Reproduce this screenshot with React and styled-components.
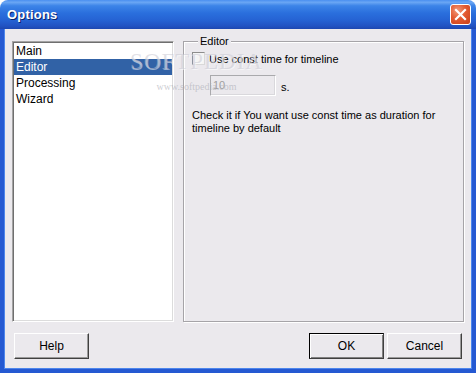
import styled, { createGlobalStyle } from "styled-components";

const GlobalStyle = createGlobalStyle`
    body {
        margin: 0;
        background: #ffffff;
        overflow: hidden;
        font-family: "Liberation Sans", Arial, sans-serif;
    }
`

const pages = ["Main", "Editor", "Processing", "Wizard"];

const App = () => {
    return (
        <>
            <GlobalStyle />
            <Window>
                <TitleBar>
                    <Title>Options</Title>
                    <CloseButton aria-label="close">
                        <svg width="13" height="13" viewBox="0 0 13 13">
                            <path d="M2 2 L11 11 M11 2 L2 11" stroke="#fff" strokeWidth="2.2" strokeLinecap="square" />
                        </svg>
                    </CloseButton>
                </TitleBar>
                <Frame>
                    <TopRow>
                        <ListBox>
                            {pages.map((page) =>
                                <ListItem key={page} selected={page === "Editor"}>{page}</ListItem>
                            )}
                        </ListBox>
                        <Group>
                            <Legend>Editor</Legend>
                            <CheckRow>
                                <CheckBox />
                                <span>Use const time for timeline</span>
                            </CheckRow>
                            <FieldRow>
                                <Edit>10</Edit>
                                <Unit>s.</Unit>
                            </FieldRow>
                            <Hint>
                                Check it if You want use const time as duration for timeline by default
                            </Hint>
                        </Group>
                        <Watermark>
                            <BigMark>SOFTPEDIA</BigMark>
                            <SmallMark>www.softpedia.com</SmallMark>
                        </Watermark>
                    </TopRow>
                    <ButtonRow>
                        <Button>Help</Button>
                        <Spacer />
                        <Button primary>OK</Button>
                        <Button>Cancel</Button>
                    </ButtonRow>
                </Frame>
            </Window>
        </>
    );
}

const Window = styled.div`
    width: 476px;
    height: 373px;
    display: flex;
    flex-direction: column;
    border-radius: 8px 8px 0 0;
    overflow: hidden;
    font-size: 11px;
    color: #000;
`

const TitleBar = styled.div`
    height: 29px;
    flex: none;
    display: flex;
    align-items: center;
    justify-content: space-between;
    padding: 0 5px 0 7px;
    background: linear-gradient(to bottom,
        #4a8ff0 0%, #6aa6f4 8%, #3c84e8 20%, #2a6fdd 45%, #2562d3 70%, #2152c2 90%, #1d47b0 100%);
    box-sizing: border-box;
`

const Title = styled.span`
    color: #ffffff;
    font-family: "Liberation Sans", Arial, sans-serif;
    font-weight: bold;
    font-size: 13px;
    text-shadow: 1px 1px 0 #0a246a;
    letter-spacing: 0.2px;
`

const CloseButton = styled.div`
    width: 21px;
    height: 21px;
    box-sizing: border-box;
    border: 1px solid #ffffff;
    border-radius: 3px;
    background: radial-gradient(circle at 35% 30%, #f29a7a 0%, #e35b32 45%, #c93f18 100%);
    display: flex;
    align-items: center;
    justify-content: center;
`

const Frame = styled.div`
    flex: 1;
    display: flex;
    flex-direction: column;
    background: #ebe9ed;
    border: 4px solid #2559d2;
    border-top: none;
    box-shadow: inset 1px 0 0 #4d86ec, inset -1px 0 0 #4d86ec, inset 0 -1px 0 #4d86ec;
    padding: 6px 4px 10px 4px;
`

const TopRow = styled.div`
    position: relative;
    height: 287px;
    display: flex;
    align-items: flex-start;
    gap: 9px;
    margin: 0 4px;
`

const ListBox = styled.div`
    width: 162px;
    height: 281px;
    margin-top: 6px;
    box-sizing: border-box;
    background: #ffffff;
    border-top: 1px solid #a3a3a3;
    border-left: 1px solid #a3a3a3;
    border-right: 1px solid #ffffff;
    border-bottom: 1px solid #ffffff;
    box-shadow: inset 1px 1px 0 #6f6f6f, inset -1px -1px 0 #dcdcdc;
    padding: 1px;
`

const ListItem = styled.div`
    height: 16px;
    line-height: 16px;
    padding-left: 2px;
    font-size: 12px;
    background: ${(p) => (p.selected ? "#3162a6" : "transparent")};
    color: ${(p) => (p.selected ? "#ffffff" : "#000000")};
`

const Group = styled.fieldset`
    flex: 1;
    height: 287px;
    box-sizing: border-box;
    margin: 0;
    padding: 0 8px;
    border: 1px solid #a6a4a8;
    box-shadow: 1px 1px 0 #ffffff, inset 1px 1px 0 #ffffff;
    min-width: 0;
`

const Legend = styled.legend`
    margin-left: 6px;
    padding: 0 2px;
    font-size: 11px;
    line-height: 13px;
    background: #ebe9ed;
`

const CheckRow = styled.div`
    display: flex;
    align-items: center;
    gap: 4px;
    margin-top: 4px;
    height: 13px;
`

const CheckBox = styled.span`
    width: 13px;
    height: 13px;
    box-sizing: border-box;
    background: #f4f4f4;
    border-top: 1px solid #8c8c8c;
    border-left: 1px solid #8c8c8c;
    border-right: 1px solid #d9d9d9;
    border-bottom: 1px solid #d9d9d9;
`

const FieldRow = styled.div`
    display: flex;
    align-items: flex-end;
    gap: 5px;
    margin-top: 10px;
    margin-left: 18px;
`

const Edit = styled.div`
    width: 66px;
    height: 21px;
    box-sizing: border-box;
    border: 1px solid #a9a9ac;
    border-right-color: #ffffff;
    border-bottom-color: #ffffff;
    box-shadow: inset -1px -1px 0 #d9d8dc;
    background: #ebe9ed;
    color: #a0a0a0;
    padding: 3px 2px;
    line-height: 13px;
`

const Unit = styled.span`
    line-height: 13px;
    margin-bottom: 2px;
`

const Hint = styled.p`
    margin: 13px 0 0 0;
    line-height: 13px;
    width: 260px;
`

const Watermark = styled.div`
    position: absolute;
    left: 118px;
    top: 14px;
    pointer-events: none;
    display: flex;
    flex-direction: column;
    align-items: center;
    font-family: "Liberation Serif", "Times New Roman", serif;
`

const BigMark = styled.div`
    font-size: 23px;
    letter-spacing: 1px;
    color: rgba(200, 200, 210, 0.55);
    text-shadow: 1px 1px 0 rgba(255, 255, 255, 0.5);
`

const SmallMark = styled.div`
    font-size: 10px;
    margin-top: 6px;
    color: rgba(170, 170, 180, 0.6);
`

const ButtonRow = styled.div`
    display: flex;
    gap: 3px;
    margin: 11px 6px 0 6px;
`

const Spacer = styled.div`
    flex: 1;
`

const Button = styled.div`
    width: 75px;
    height: 26px;
    box-sizing: border-box;
    display: flex;
    align-items: center;
    justify-content: center;
    font-size: 12px;
    background: #ebe9ed;
    border-top: 1px solid ${(p) => (p.primary ? "#000" : "#ffffff")};
    border-left: 1px solid ${(p) => (p.primary ? "#000" : "#ffffff")};
    border-right: 1px solid #404040;
    border-bottom: 1px solid #404040;
    box-shadow: ${(p) => (p.primary
        ? "inset 1px 1px 0 #ffffff, inset -1px -1px 0 #808080"
        : "inset -1px -1px 0 #9a9a9a")};
`

export default App;
